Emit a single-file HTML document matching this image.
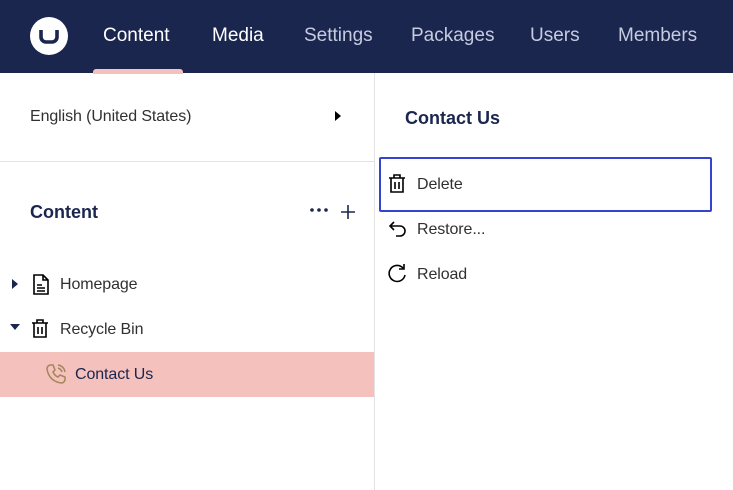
<!DOCTYPE html>
<html><head><meta charset="utf-8"><style>
*{box-sizing:border-box;margin:0;padding:0}
body{width:733px;height:490px;overflow:hidden;background:#fff;font-family:"Liberation Sans",sans-serif;color:#1b264f;position:relative}
.hdr{position:absolute;left:0;top:0;width:733px;height:73px;background:#1b264f}
.logo{position:absolute;left:30px;top:17px;width:38px;height:38px;border-radius:50%;background:#fff}
.nav{position:absolute;top:25px;font-size:19px;color:#fff}
.nav.dim{color:#c6cbe0}
.ind{position:absolute;left:93px;top:69px;width:90px;height:5px;background:#f5c1bc;border-radius:3px 3px 0 0}
.vline{position:absolute;left:374px;top:73px;width:1px;height:417px;background:#e3e3e3}
.hline{position:absolute;left:0;top:161px;width:374px;height:1px;background:#e3e3e3}
.t{position:absolute;font-size:16px;color:#303033;letter-spacing:-0.1px}
.b{position:absolute;font-size:18px;font-weight:bold;color:#1b264f}
.sel{position:absolute;left:0;top:352px;width:374px;height:45px;background:#f5c1bc}
.focus{position:absolute;left:379px;top:157px;width:333px;height:55px;border:2px solid #3544d0;border-radius:2px}
svg{position:absolute}
</style></head><body>
<div class="hdr">
 <div class="logo"><svg width="38" height="38" viewBox="0 0 38 38"><path d="M11 13 v7 a5 5 0 0 0 5 5 h6 a5 5 0 0 0 5 -5 v-7" fill="none" stroke="#1b264f" stroke-width="3.6"/></svg></div>
 <div class="nav" style="left:103px">Content</div>
 <div class="nav" style="left:212px">Media</div>
 <div class="nav dim" style="left:304px">Settings</div>
 <div class="nav dim" style="left:411px">Packages</div>
 <div class="nav dim" style="left:530px">Users</div>
 <div class="nav dim" style="left:618px">Members</div>
 <div class="ind"></div>
</div>
<div class="vline"></div><div class="hline"></div>
<div class="t" style="left:30px;top:108px">English (United States)</div>
<svg style="left:334px;top:110px" width="8" height="12"><path d="M1 1 L7 6 L1 11Z" fill="#000"/></svg>
<div class="b" style="left:30px;top:202px">Content</div>
<svg style="left:309px;top:206px" width="20" height="8"><circle cx="3" cy="4" r="1.8" fill="#1b264f"/><circle cx="10" cy="4" r="1.8" fill="#1b264f"/><circle cx="17" cy="4" r="1.8" fill="#1b264f"/></svg>
<svg style="left:340px;top:204px" width="16" height="16"><path d="M8 1 V15 M1 8 H15" stroke="#1b264f" stroke-width="1.6"/></svg>
<svg style="left:11px;top:278px" width="8" height="12"><path d="M1 1 L7 6 L1 11Z" fill="#1b264f"/></svg>
<svg style="left:32px;top:274px" width="18" height="21" fill="none" stroke="#000" stroke-width="1.6"><path d="M2 1 H11 L16 6 V20 H2Z M11 1 V6 H16 M5 11 H10 M5 14 H13 M5 17 H13"/></svg>
<div class="t" style="left:60px;top:276px">Homepage</div>
<svg style="left:9px;top:323px" width="12" height="8"><path d="M1 1 H11 L6 7Z" fill="#1b264f"/></svg>
<svg style="left:31px;top:318px" width="18" height="21" fill="none" stroke="#000" stroke-width="1.6"><path d="M1 5 H17 M6 5 V2 H12 V5 M3 5 V19 H15 V5 M7 9 V16 M11 9 V16"/></svg>
<div class="t" style="left:60px;top:321px">Recycle Bin</div>
<div class="sel"></div>
<svg style="left:45px;top:363px" width="22" height="22" fill="none" stroke="#a4865d" stroke-width="1.5"><path d="M5 2 L8 2 L10 7 L8 9 Q10 13 13 14 L15 12 L20 14 V17 Q19 20 16 20 Q4 18 2 6 Q2 3 5 2Z M13 2 Q19 3 20 9 M13 5 Q16 6 17 9"/></svg>
<div class="t" style="left:75px;top:366px;color:#1b264f">Contact Us</div>
<div class="b" style="left:405px;top:108px">Contact Us</div>
<div class="focus"></div>
<svg style="left:388px;top:173px" width="18" height="21" fill="none" stroke="#000" stroke-width="1.6"><path d="M1 5 H17 M6 5 V2 H12 V5 M3 5 V19 H15 V5 M7 9 V16 M11 9 V16"/></svg>
<div class="t" style="left:417px;top:176px">Delete</div>
<svg style="left:388px;top:220px" width="20" height="18" fill="none" stroke="#000" stroke-width="1.6"><path d="M6 2 L2 6 L6 10 M2 6 H12 A5 5 0 0 1 12 16 H8"/></svg>
<div class="t" style="left:417px;top:221px">Restore...</div>
<svg style="left:387px;top:263px" width="20" height="20" fill="none" stroke="#000" stroke-width="1.6"><path d="M16 5 A8 8 0 1 0 18 12 M17 1 V6 H12"/></svg>
<div class="t" style="left:417px;top:266px">Reload</div>
</body></html>
